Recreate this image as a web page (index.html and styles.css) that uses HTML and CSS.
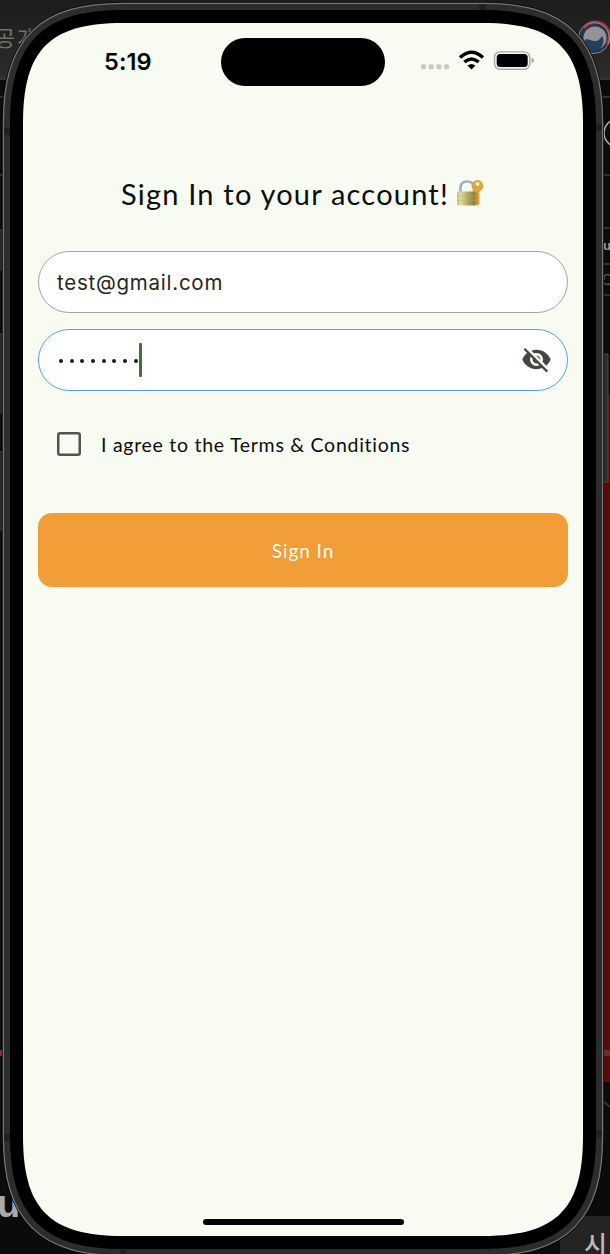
FILE: index.html
```html
<!DOCTYPE html>
<html lang="en">
<head>
<meta charset="utf-8">
<title>Sign In</title>
<link rel="stylesheet" href="styles.css">
</head>
<body>
<svg class="backdrop" viewBox="0 0 610 1254" aria-hidden="true">
  <defs>
    <linearGradient id="desk" x1="0" y1="0" x2="0" y2="1"><stop offset="0" stop-color="#1c1c1b"/><stop offset="1" stop-color="#2c2c2a"/></linearGradient>
    <path id="face" d="M123 23H483C556.300 23 583 49.700 583 123V1136C583 1209.300 556.300 1236 483 1236H123C49.700 1236 23 1209.300 23 1136V123C23 49.700 49.700 23 123 23Z"/>
  </defs>
  <path d="M0 0H610V1254H0Z" fill="#0b0b0b"/>
  <path d="M0 0H610V79H0Z" fill="url(#desk)"/>
  <path d="M0 79H6M598 79H610M0 97H6M598 97H610M0 175H6M598 175H610M0 230H6M0 334H6M0 452H6M598 228H610M598 264H610M598 295H610" stroke="#3c3c3c" stroke-width="1.3"/>
  <path d="M0 231H6V271H0ZM0 335H6V414H0ZM0 453H6V531H0Z" fill="#282828"/>
  <path d="M600 395H610V1082H600Z" fill="#570d06"/>
  <path d="M600 354H608V482H600Z" fill="#2b2d2c" stroke="#4b4b4b"/>
  <path d="M0 1050H4V1056H0Z" fill="#96233d"/>
  <path d="M600 1050H610V1056H600Z" fill="#633030"/>
  <path d="M560 1216H610V1254H560Z" fill="#242424"/>
  <path d="M603 1101L610 1107" stroke="#333" stroke-width="2"/>
  <circle cx="618" cy="133" r="14" fill="none" stroke="#aaa" stroke-width="1.5"/>
  <circle cx="594" cy="38" r="15.5" fill="#26344f"/>
  <path d="M584 28A14 14 0 0 1 607 44" fill="none" stroke="#a93543" stroke-width="3"/>
  <circle cx="594" cy="38" r="15.5" fill="none" stroke="#999" stroke-width=".8"/>
  <circle cx="595" cy="38" r="11.500" fill="#929394"/>
  <path d="M583 42C587 36 591 42 596 41S602 34 603 37C605 45 600 51 593 51C587 50 583 47 583 42Z" fill="#243e5c"/>
  <g class="desk-text">
    <text x="-5" y="46" fill="#707070" font-size="22">공</text><text x="17" y="46" fill="#707070" font-size="22">개</text>
    <text x="-3" y="1217" fill="#aaa" font-size="38" font-weight="700">u</text>
    <text x="584" y="1254" fill="#bbb" font-size="25" font-weight="500">시</text>
    <text x="603" y="250" fill="#999" font-size="13" font-weight="700">u</text>
  </g>
  <path d="M604 276A5 5 0 1 1 604 283M604 275V280" fill="none" stroke="#555" stroke-width="1.5"/>
  <use href="#face" fill="none" stroke="#050505" stroke-width="42"/>
  <use href="#face" fill="none" stroke="#777775" stroke-width="40.5"/>
  <use href="#face" fill="none" stroke="#2d2d2d" stroke-width="38"/>
  <path d="M4 128H10V135H4ZM596 124H602V131H596ZM4 1134H10V1141H4ZM596 1130H602V1137H596ZM479 4H486V10H479ZM120 1250H127V1254H120Z" fill="#202020"/>
  <use href="#face" fill="none" stroke="#000" stroke-width="26"/>
  <use href="#face" fill="#f8fbf2"/>
</svg>
<main class="app">
  <header class="status">
    <span class="time">5:19</span>
    <span class="island"></span>
    <svg class="signals" viewBox="0 0 116 24" aria-label="Wi-Fi and battery">
      <g fill="#c8cbc4"><rect x="1" y="15.200" width="5" height="5" rx="1.5"/><rect x="8.700" y="15.200" width="5" height="5" rx="1.5"/><rect x="16.400" y="15.200" width="5" height="5" rx="1.5"/><rect x="24.100" y="15.200" width="5" height="5" rx="1.5"/></g>
      <g fill="none" stroke="#000" stroke-width="3.400"><path d="M40 8.500Q51.5-2 63 8.500"/><path d="M44.300 13Q51.5 6.800 58.700 13"/></g>
      <path d="M47.5 16.600Q51.5 13.500 55.5 16.600L51.5 20.500Z"/>
      <rect x="74.500" y="2.900" width="35.200" height="17.400" rx="5.500" fill="none" stroke="#a5a7a1" stroke-width="1.400"/>
      <rect x="76.700" y="5.100" width="31" height="13" rx="3.5"/>
      <path d="M111.500 8.700Q114 9.400 114 11.600T111.500 14.500Z" fill="#a5a7a1"/>
    </svg>
  </header>
  <form class="form">
    <h1 class="title"><span class="title-text">Sign In to your account!</span>
      <svg class="lock" viewBox="0 0 28 28" aria-hidden="true">
        <defs><linearGradient id="brass"><stop offset="0" stop-color="#c9c77b"/><stop offset=".2" stop-color="#e0dc9c"/><stop offset=".6" stop-color="#aaa45d"/><stop offset="1" stop-color="#807b3e"/></linearGradient></defs>
        <path d="M4.5 14V9Q4.500 2.500 11 2.500T18 9V14" fill="none" stroke="#a5b1c2" stroke-width="2.700"/>
        <rect x="1" y="12.500" width="19" height="14" rx="1" fill="url(#brass)"/>
        <path d="M1 17H20M1 21.500H20" stroke="#b5b068" stroke-width=".4"/>
        <path d="M19.500 10H23.500V25L21.500 27L19.500 25Z" fill="#dda23a"/>
        <circle cx="21.500" cy="6.800" r="5.900" fill="#e0a63d"/><circle cx="21.500" cy="4.800" r="1.900" fill="#f8fbf2"/>
        <path d="M20.800 12V25" stroke="#b9791f" stroke-width=".8"/><path d="M19.500 16H18V18H19.500ZM19.500 20H18V22H19.500Z" fill="#c98a28"/>
      </svg>
    </h1>
    <div class="field"><span class="email">test@gmail.com</span></div>
    <div class="field focused">
      <span class="dots"><i></i><i></i><i></i><i></i><i></i><i></i><i></i><i></i></span><span class="caret"></span>
      <svg class="eye" viewBox="0 0 24 24" aria-label="Show password"><path fill="#434840" d="M12 7c2.760 0 5 2.240 5 5 0 .650-.130 1.260-.360 1.830l2.920 2.920c1.510-1.260 2.700-2.890 3.430-4.750-1.730-4.390-6-7.500-11-7.500-1.400 0-2.740.250-3.980.700l2.160 2.160C10.740 7.130 11.350 7 12 7zM2 4.270l2.280 2.280.460.460C3.080 8.300 1.780 10.020 1 12c1.730 4.390 6 7.500 11 7.500 1.550 0 3.030-.300 4.380-.840l.420.420L19.730 22 21 20.730 3.270 3 2 4.270zM7.530 9.800l1.550 1.550c-.050.210-.080.430-.080.650 0 1.660 1.340 3 3 3 .220 0 .440-.030.650-.080l1.550 1.550c-.670.330-1.410.530-2.200.530-2.760 0-5-2.240-5-5 0-.790.200-1.530.530-2.200zm4.310-.780l3.150 3.150.020-.160c0-1.660-1.340-3-3-3l-.170.010z"/></svg>
    </div>
    <label class="agree"><span class="checkbox"></span><span class="terms">I agree to the Terms &amp; Conditions</span></label>
    <button class="submit" type="button">Sign In</button>
  </form>
  <span class="home"></span>
</main>
</body>
</html>
```
FILE: styles.css
```css
* { box-sizing: border-box; }
body { margin: 0; width: 610px; height: 1254px; overflow: hidden; position: relative; background: #0b0b0b; }
.backdrop { position: absolute; inset: 0; width: 610px; height: 1254px; }
.desk-text { font-family: "Liberation Sans", "Noto Sans CJK KR", sans-serif; }
.app { position: relative; width: 560px; height: 1213px; margin: 23px 27px 0 23px; display: flex; flex-direction: column; color: #0c0e0b; font-family: Lato, sans-serif; }
.status { height: 77px; display: flex; align-items: flex-start; padding: 15px 47px 0 81px; }
.time { width: 117px; margin-top: 10px; font: 600 23.500px/28px Inter, sans-serif; letter-spacing: .1px; color: #000; }
.island { width: 164px; height: 48px; border-radius: 24px; background: #000; }
.signals { width: 116px; height: 24px; margin: 11px 0 0 35px; flex: none; }
.form { padding: 0 15px; display: flex; flex-direction: column; }
.title { display: flex; align-items: center; height: 44px; margin: 71px 0 36px 83px; font-size: 29px; font-weight: 400; gap: 7px; }
.title-text { letter-spacing: 1.200px; white-space: nowrap; width: 328px; }
.lock { width: 28px; height: 28px; flex: none; }
.field { height: 62px; border: 1.500px solid #a4a4a4; border-radius: 31px; background: #fff; display: flex; align-items: center; padding: 0 15px 0 18px; margin-bottom: 15.500px; }
.focused { border-color: #559fee; margin-bottom: 36.500px; }
.email { font: 400 20.500px/30px Inter, sans-serif; letter-spacing: .75px; color: #252724; padding-top: 2px; }
.dots { display: flex; gap: 6.700px; padding: 3px 2px 0 2px; }
.dots i { width: 4px; height: 4px; border-radius: 50%; background: #1b1e19; }
.caret { width: 3px; height: 34px; border-radius: 1px; background: #456b3f; margin-left: -1px; }
.eye { width: 31px; height: 31px; margin-left: auto; }
.agree { display: flex; align-items: center; height: 34px; padding-left: 19px; gap: 20px; margin-bottom: 52px; }
.checkbox { width: 24px; height: 24px; box-shadow: inset 0 0 0 2.500px #50544c; border-radius: 3px; }
.terms { font-size: 19.500px; letter-spacing: .72px; white-space: nowrap; }
.submit { height: 74px; border: 0; border-radius: 14px; background: #f19e39; color: #fffdf7; font: 400 19px Lato, sans-serif; letter-spacing: .95px; }
.home { width: 201px; height: 6px; border-radius: 3px; background: #000; margin: auto auto 11px 180px; }
```
